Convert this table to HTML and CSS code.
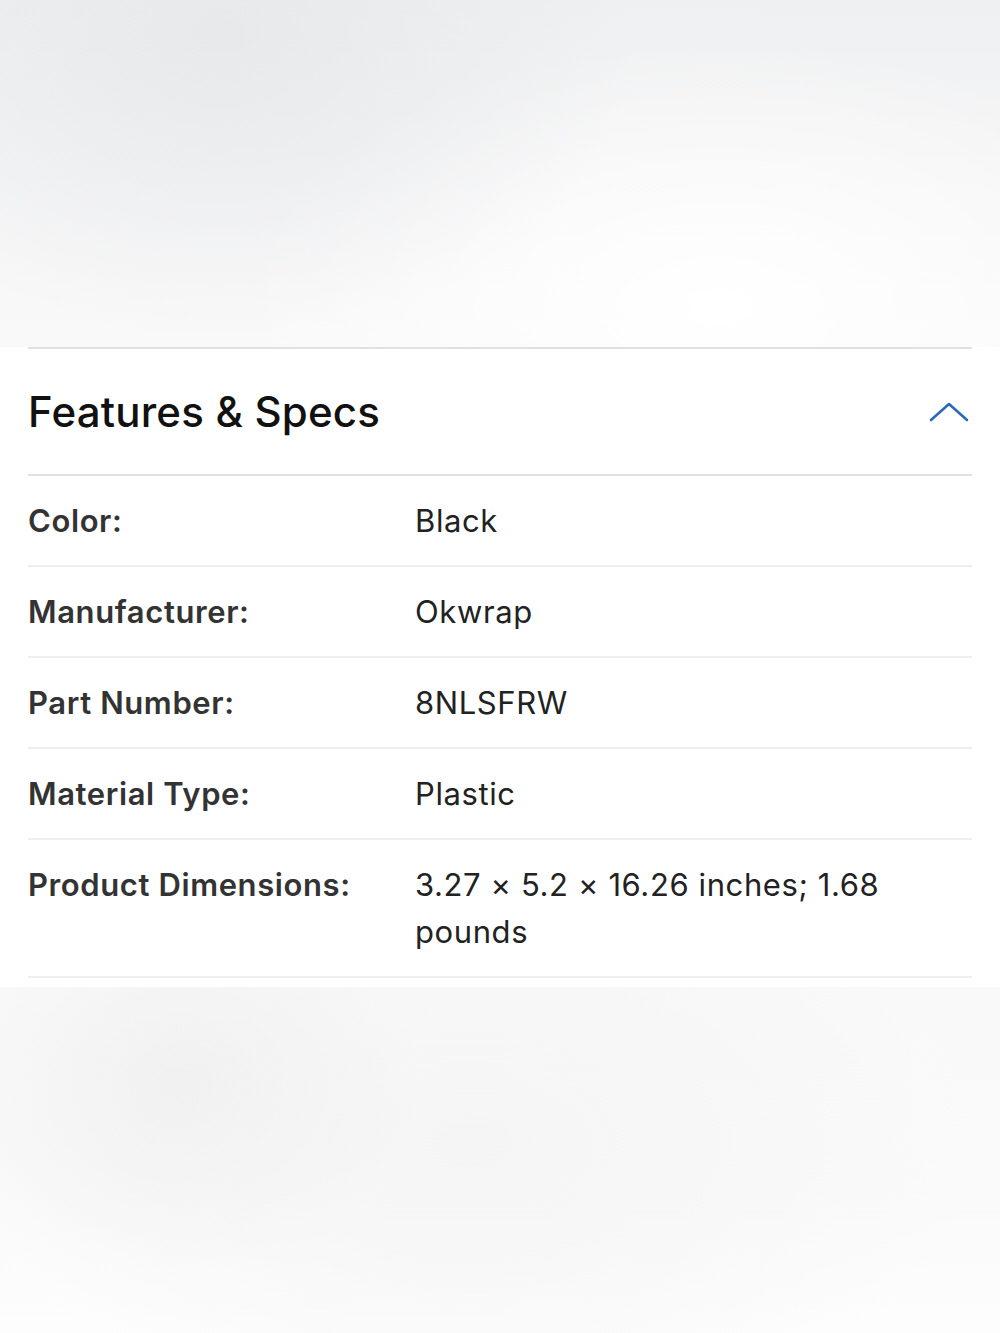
FILE: index.html
```html
<!DOCTYPE html>
<html lang="en">
<head>
<meta charset="utf-8">
<title>Features &amp; Specs</title>
<link rel="stylesheet" href="styles.css">
</head>
<body>
<div class="page">
  <div class="blur-top"></div>
  <section class="panel">
    <div class="panel-head">
      <h2 class="title">Features &amp; Specs</h2>
      <svg class="chevron" width="40" height="20" viewBox="0 0 40 20" aria-hidden="true">
        <polyline points="2,18 20,2 38,18" fill="none" stroke="#2b68bd" stroke-width="2.6" stroke-linecap="round" stroke-linejoin="round"/>
      </svg>
    </div>
    <div class="specs">
      <div class="row"><div class="label">Color:</div><div class="value">Black</div></div>
      <div class="row"><div class="label">Manufacturer:</div><div class="value">Okwrap</div></div>
      <div class="row"><div class="label">Part Number:</div><div class="value">8NLSFRW</div></div>
      <div class="row"><div class="label">Material Type:</div><div class="value">Plastic</div></div>
      <div class="row"><div class="label">Product Dimensions:</div><div class="value">3.27 × 5.2 × 16.26 inches; 1.68 pounds</div></div>
    </div>
  </section>
  <div class="blur-bottom"></div>
</div>
</body>
</html>
```
FILE: styles.css
```css
html, body {
  margin: 0;
  padding: 0;
  background: #ffffff;
}
.page {
  display: flex;
  flex-direction: column;
  min-height: 1333px;
  font-family: "Inter", "Liberation Sans", sans-serif;
}
.blur-top {
  height: 347px;
  background:
    radial-gradient(ellipse 420px 300px at 22% 10%, rgba(230,232,234,0.9), rgba(240,241,242,0) 100%),
    radial-gradient(ellipse 700px 380px at 72% 88%, #ffffff 0%, rgba(255,255,255,0) 70%),
    linear-gradient(180deg, #eff0f1 0%, #f6f6f7 60%, #f9f9f9 100%);
}
.panel {
  background: #ffffff;
  padding: 0 28px 9px;
}
.panel-head {
  display: flex;
  align-items: center;
  justify-content: space-between;
  height: 125px;
  border-top: 2px solid #e1e1e3;
  border-bottom: 2px solid #e1e1e3;
}
.title {
  margin: 0;
  font-size: 42px;
  font-weight: 500;
  color: #111111;
  letter-spacing: 0.2px;
}
.chevron {
  margin-right: 3px;
}
.row {
  display: grid;
  grid-template-columns: 387px 1fr;
  padding: 21px 0;
  border-bottom: 2px solid #eeeef0;
  font-size: 31px;
  line-height: 47px;
  letter-spacing: 0.6px;
  color: #2b2b2b;
}
.label {
  font-weight: 600;
  color: #333333;
}
.value {
  font-weight: 400;
  color: #222222;
  padding-right: 70px;
}
.blur-bottom {
  flex: 1;
  background:
    radial-gradient(ellipse 240px 190px at 18% 28%, rgba(240,240,241,0.9), rgba(246,246,246,0) 100%),
    radial-gradient(ellipse 500px 300px at 47% 45%, #f5f5f5 0%, rgba(248,248,248,0) 100%),
    linear-gradient(180deg, #f9f9f9 0%, #fafafa 60%, #fdfdfd 100%);
}
```
